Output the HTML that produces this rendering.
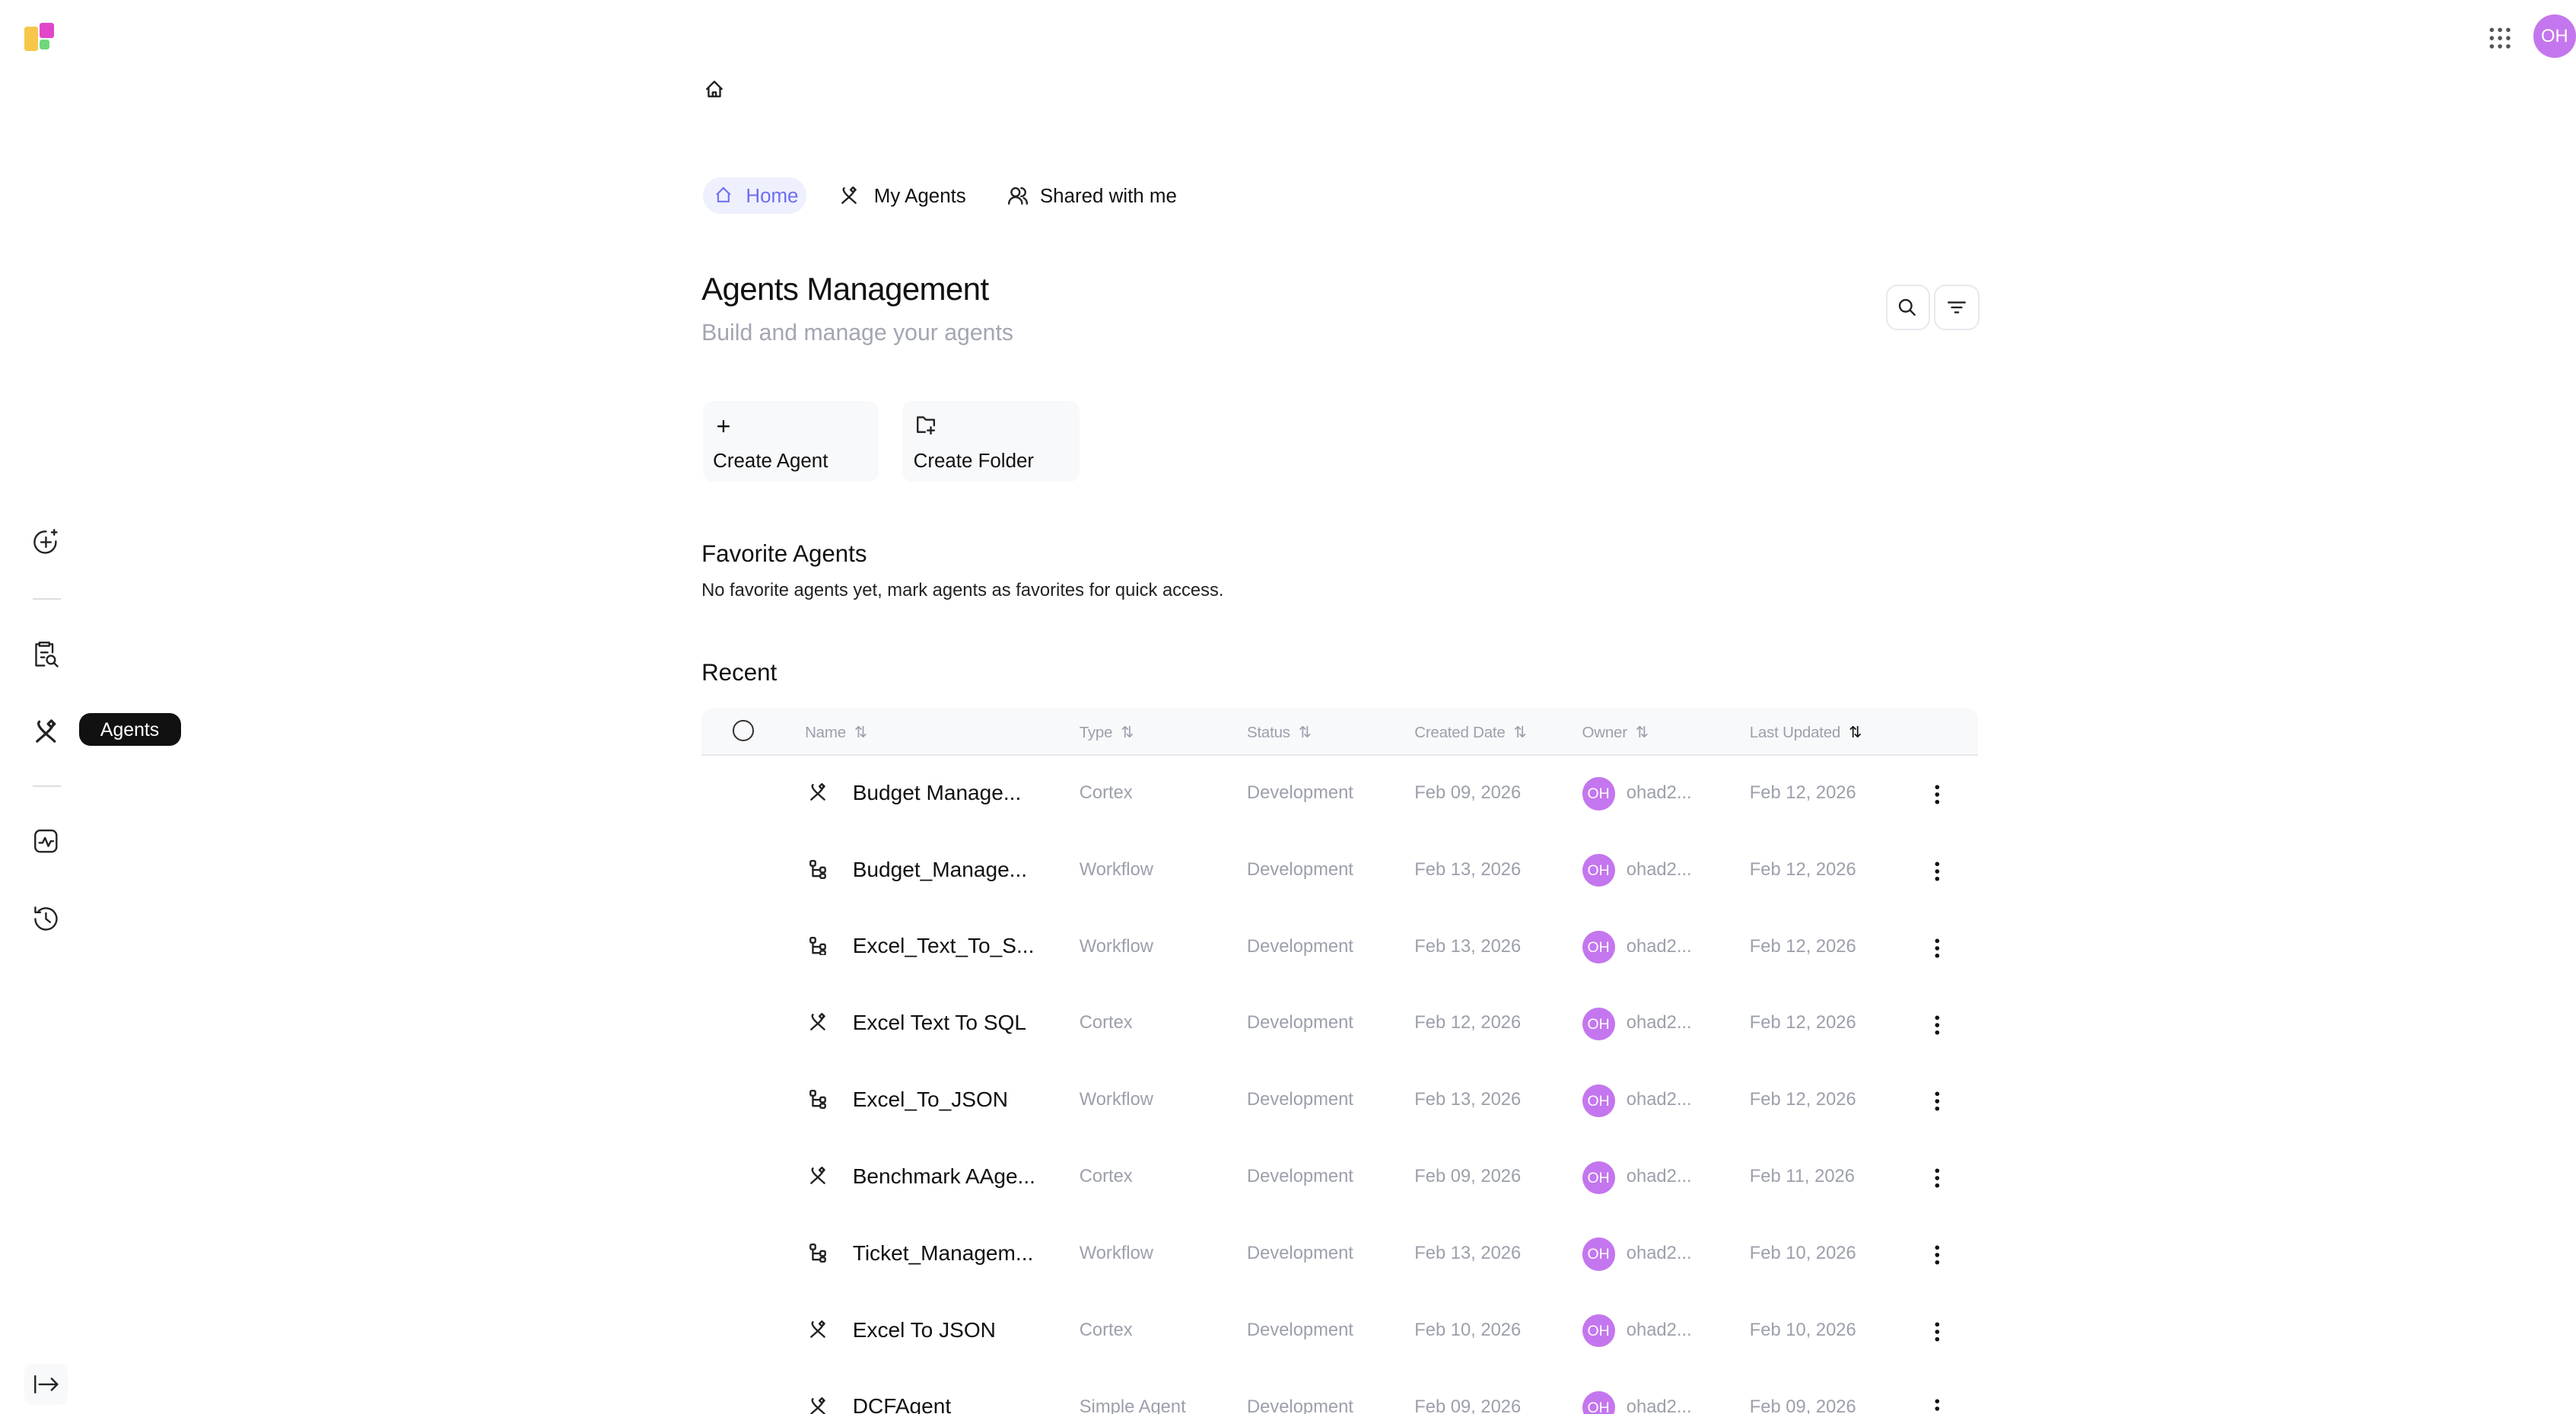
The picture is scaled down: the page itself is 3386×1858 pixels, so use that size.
<!DOCTYPE html>
<html><head><meta charset="utf-8"><style>
html,body{margin:0;padding:0;background:#fff;overflow:hidden}
body{width:3386px;height:1858px}
#s{zoom:2.1594;position:relative;width:1568px;height:860px;font-family:"Liberation Sans",sans-serif;color:#111}
.a{position:absolute}
svg{display:block}
.ic{stroke:#222;fill:none;stroke-width:1.1;stroke-linecap:round;stroke-linejoin:round}
.th{position:absolute;top:440px;font-size:9.5px;color:#9ca0ab;letter-spacing:-.1px}
.row{position:absolute;left:427px;width:777px;height:47px}
.row .t{position:absolute;top:17px;font-size:11px;color:#9ca0ab}
</style></head><body><div id="s">
<div class="a" style="left:15px;top:16px;width:8px;height:15px;background:#f7c74b;border-radius:1.5px"></div>
<div class="a" style="left:24px;top:14px;width:9px;height:9px;background:#e246c8;border-radius:1.5px"></div>
<div class="a" style="left:24px;top:24px;width:6px;height:6px;background:#6fd67a;border-radius:1.5px"></div>
<svg class="a" style="left:1515px;top:16px" width="14" height="14"><g fill="#555"><circle cx="2" cy="2" r="1.3"/><circle cx="7" cy="2" r="1.3"/><circle cx="12" cy="2" r="1.3"/><circle cx="2" cy="7" r="1.3"/><circle cx="7" cy="7" r="1.3"/><circle cx="12" cy="7" r="1.3"/><circle cx="2" cy="12" r="1.3"/><circle cx="7" cy="12" r="1.3"/><circle cx="12" cy="12" r="1.3"/></g></svg>
<div class="a" style="left:1542px;top:9px;width:26px;height:26px;border-radius:50%;background:#c476ee;color:#fff;font-size:11px;line-height:27px;text-align:center">OH</div>
<svg class="a ic" style="left:429px;top:48px" width="12" height="12" viewBox="0 0 12 12"><path d="M1.5 6 6 1.5 10.5 6M2.5 5v5.5h7V5M5 10.5V8h2v2.5"/></svg>
<div class="a" style="left:428px;top:108px;width:63px;height:22px;border-radius:11px;background:#eff0fd"></div>
<svg class="a" style="left:435px;top:113px;stroke:#7272f0;fill:none;stroke-width:1.1" width="11" height="11" viewBox="0 0 12 12"><path d="M1.5 6 6 1.5 10.5 6M2.5 5v5.5h7V5"/></svg>
<div class="a" style="left:454px;top:113px;font-size:12px;color:#6d6df2">Home</div>
<svg class="a ic" style="left:511px;top:113px" width="12" height="12" viewBox="0 0 12 12"><path d="M3 1.5c-2 2 5 7 7 9M9 1.5c2 2-5 7-7 9M8.5 1 10 2.5 8.5 4 7 2.5z"/></svg>
<div class="a" style="left:532px;top:113px;font-size:12px">My Agents</div>
<svg class="a ic" style="left:613px;top:113px" width="13" height="12" viewBox="0 0 13 12"><circle cx="5" cy="4" r="2.5"/><path d="M1 11c0-2.5 2-4 4-4s4 1.5 4 4M8.5 1.5a2.5 2.5 0 0 1 0 5M10 7.5c1.2.6 2 1.8 2 3.5"/></svg>
<div class="a" style="left:633px;top:113px;font-size:12px">Shared with me</div>
<div class="a" style="left:427px;top:165px;font-size:19.5px;letter-spacing:-.3px">Agents Management</div>
<div class="a" style="left:427px;top:195px;font-size:14px;color:#a3a6b2">Build and manage your agents</div>
<div class="a" style="left:1148px;top:173px;width:25px;height:26px;border:1px solid #e8e9ee;border-radius:7px"></div>
<svg class="a ic" style="left:1155px;top:181px" width="12" height="12" viewBox="0 0 12 12"><circle cx="5" cy="5" r="3.6"/><path d="M8 8l2.5 2.5"/></svg>
<div class="a" style="left:1177px;top:173px;width:26px;height:26px;border:1px solid #e8e9ee;border-radius:7px"></div>
<svg class="a ic" style="left:1185px;top:181px" width="12" height="12" viewBox="0 0 12 12"><path d="M1 3h10M3 6h6M5 9h2"/></svg>
<div class="a" style="left:428px;top:244px;width:107px;height:49px;background:#f8f9fb;border-radius:6px"></div>
<div class="a" style="left:436px;top:252px;font-size:15px;line-height:15px">+</div>
<div class="a" style="left:434px;top:274px;font-size:12px">Create Agent</div>
<div class="a" style="left:549px;top:244px;width:108px;height:49px;background:#f8f9fb;border-radius:6px"></div>
<svg class="a ic" style="left:557px;top:252px" width="13" height="13" viewBox="0 0 13 13"><path d="M6 11H1.5V2h3.5l1.5 1.5h5V7M9.5 8v4M7.5 10h4"/></svg>
<div class="a" style="left:556px;top:274px;font-size:12px">Create Folder</div>
<div class="a" style="left:427px;top:329px;font-size:14.5px">Favorite Agents</div>
<div class="a" style="left:427px;top:353px;font-size:11px;color:#222">No favorite agents yet, mark agents as favorites for quick access.</div>
<div class="a" style="left:427px;top:401px;font-size:14.5px">Recent</div>
<div class="a" style="left:427px;top:431px;width:777px;height:28px;background:#f8f9fb;border-bottom:1px solid #e5e7eb;border-radius:6px 6px 0 0"></div>
<div class="a" style="left:446px;top:438px;width:11px;height:11px;border:1.2px solid #333;border-radius:50%"></div>
<div class="th" style="left:490px">Name &nbsp;⇅</div>
<div class="th" style="left:657px">Type &nbsp;⇅</div>
<div class="th" style="left:759px">Status &nbsp;⇅</div>
<div class="th" style="left:861px">Created Date &nbsp;⇅</div>
<div class="th" style="left:963px">Owner &nbsp;⇅</div>
<div class="th" style="left:1065px">Last Updated &nbsp;<span style="color:#111">⇅</span></div>
<div id="rows"></div>
<svg class="a ic" style="left:19px;top:321px" width="18" height="18" viewBox="0 0 18 18"><path d="M15 8.5A6.5 6.5 0 1 1 9 2.5M9 6v6M6 9h6M14 1.5v3M12.5 3h3"/></svg>
<div class="a" style="left:20px;top:364px;width:17px;height:1px;background:#ddd"></div>
<svg class="a ic" style="left:19px;top:389px" width="18" height="18" viewBox="0 0 18 18"><path d="M8 16H3V3h2M11 3h2v5M5 2h6v2H5zM6 8h4M6 11h2"/><circle cx="12" cy="12.5" r="2.5"/><path d="M14 14.5l2 2"/></svg>
<svg class="a ic" style="left:20px;top:437px" width="16" height="16" viewBox="0 0 12 12"><path d="M3 1.5c-2 2 5 7 7 9M9 1.5c2 2-5 7-7 9M8.5 1 10 2.5 8.5 4 7 2.5z"/></svg>
<div class="a" style="left:48px;top:434px;width:62px;height:20px;background:#111;border-radius:7px;color:#fff;font-size:11.5px;line-height:21px;text-align:center">Agents</div>
<div class="a" style="left:20px;top:478px;width:17px;height:1px;background:#ddd"></div>
<svg class="a ic" style="left:20px;top:504px" width="16" height="16" viewBox="0 0 16 16"><rect x="1.5" y="1.5" width="13" height="13" rx="3"/><path d="M4 9h2l1.5-3 2 5L11 8h1.5"/></svg>
<svg class="a ic" style="left:19px;top:550px" width="18" height="18" viewBox="0 0 18 18"><path d="M2.5 9A6.5 6.5 0 1 0 4.5 4.3M2.5 2v3h3M9 5.5V9l2.5 2"/></svg>
<div class="a" style="left:15px;top:830px;width:26px;height:25px;background:#f8f9fb;border-radius:5px"></div>
<svg class="a ic" style="left:20px;top:836px" width="17" height="13" viewBox="0 0 17 13"><path d="M1.5 1.5v10M4 6.5h11M11.5 3l3.5 3.5-3.5 3.5"/></svg>
</div>
<script>
var d=[["a","Budget Manage...","Cortex","Feb 09, 2026","Feb 12, 2026"],["w","Budget_Manage...","Workflow","Feb 13, 2026","Feb 12, 2026"],["w","Excel_Text_To_S...","Workflow","Feb 13, 2026","Feb 12, 2026"],["a","Excel Text To SQL","Cortex","Feb 12, 2026","Feb 12, 2026"],["w","Excel_To_JSON","Workflow","Feb 13, 2026","Feb 12, 2026"],["a","Benchmark AAge...","Cortex","Feb 09, 2026","Feb 11, 2026"],["w","Ticket_Managem...","Workflow","Feb 13, 2026","Feb 10, 2026"],["a","Excel To JSON","Cortex","Feb 10, 2026","Feb 10, 2026"],["a","DCFAgent","Simple Agent","Feb 09, 2026","Feb 09, 2026"]];
var h="";d.forEach(function(r,i){var y=459+i*46.7;
var ic=r[0]=="a"?'<path d="M3 1.5c-2 2 5 7 7 9M9 1.5c2 2-5 7-7 9M8.5 1 10 2.5 8.5 4 7 2.5z"/>':'<rect x="1.5" y="1" width="3" height="3" rx=".8"/><rect x="7.5" y="5" width="3" height="3" rx=".8"/><rect x="7.5" y="9" width="3" height="2.5" rx=".8"/><path d="M3 4v6.3h4.5M3 6.5h4.5"/>';
h+='<div class="row" style="top:'+y+'px"><svg class="a ic" style="left:65px;top:17px" width="12" height="12" viewBox="0 0 12 12">'+ic+'</svg>'+
'<div class="a" style="left:92px;top:16px;font-size:13px;color:#111">'+r[1]+'</div>'+
'<div class="t" style="left:230px">'+r[2]+'</div><div class="t" style="left:332px">Development</div><div class="t" style="left:434px">'+r[3]+'</div>'+
'<div class="a" style="left:536px;top:14px;width:20px;height:20px;border-radius:50%;background:#c476ee;color:#fff;font-size:9px;line-height:21px;text-align:center">OH</div>'+
'<div class="t" style="left:563px">ohad2...</div><div class="t" style="left:638px">'+r[4]+'</div>'+
'<svg class="a" style="left:750px;top:18px" width="4" height="13"><g fill="#111"><circle cx="2" cy="2" r="1.3"/><circle cx="2" cy="6.5" r="1.3"/><circle cx="2" cy="11" r="1.3"/></g></svg></div>';});
document.getElementById("rows").outerHTML=h;
</script>
</body></html>
